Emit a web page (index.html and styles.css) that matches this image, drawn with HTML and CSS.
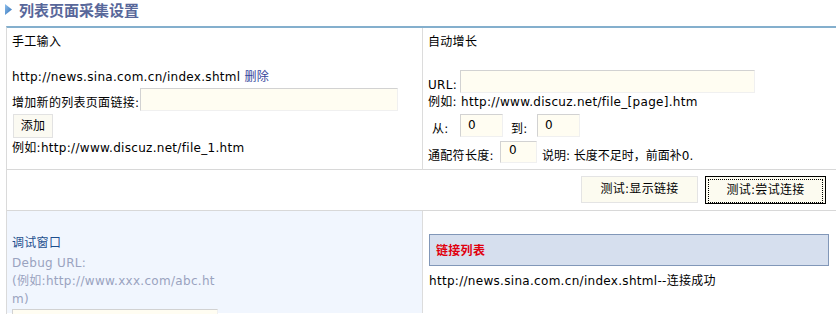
FILE: index.html
```html
<!DOCTYPE html>
<html>
<head>
<meta charset="utf-8">
<link rel="stylesheet" href="styles.css">
</head>
<body>
<div class="title">
  <svg class="tri" width="9" height="13" viewBox="0 0 9 13"><defs><linearGradient id="g" x1="0" y1="0" x2="1" y2="1"><stop offset="0" stop-color="#8fc0ec"/><stop offset="1" stop-color="#2f6fb8"/></linearGradient></defs><path d="M1 1 L8 6.5 L1 12 Z" fill="url(#g)"/></svg>
  <span>列表页面采集设置</span>
</div>
<div class="panel">
  <div class="cell c-left r1">
    <div class="line l-first">手工输入</div>
    <div class="line l-url">http://news.sina.com.cn/index.shtml <a class="del">删除</a></div>
    <div class="row r-add"><span>增加新的列表页面链接:</span><span class="inp w-add"></span></div>
    <div class="btn-add">添加</div>
    <div class="line l-ex">例如:http://www.discuz.net/file_1.htm</div>
  </div>
  <div class="cell c-right r1">
    <div class="line l-first">自动增长</div>
    <div class="row r-url"><span class="lab-url">URL:</span><span class="inp w-url"></span></div>
    <div class="line l-ex2">例如: http://www.discuz.net/file_[page].htm</div>
    <div class="row r-from"><span class="lab-from">从:</span><span class="inp w-num">0</span><span class="lab-to">到:</span><span class="inp w-num">0</span></div>
    <div class="row r-len"><span class="lab-len">通配符长度:</span><span class="inp w-len">0</span><span class="note">说明: 长度不足时，前面补0.</span></div>
  </div>
  <div class="cell c-full r2">
    <div class="btn b1">测试:显示链接</div>
    <div class="btn b2"><span>测试:尝试连接</span></div>
  </div>
  <div class="cell c-left r3">
    <div class="dbg-title">调试窗口</div>
    <div class="dbg-text">Debug URL:<br>(例如:http://www.xxx.com/abc.htm)</div>
    <div class="inp dbg-inp"></div>
  </div>
  <div class="cell c-right r3 r3r">
    <div class="listhead">链接列表</div>
    <div class="line l-res">http://news.sina.com.cn/index.shtml--连接成功</div>
  </div>
</div>
</body>
</html>
```
FILE: styles.css
```css
html, body {
  margin: 0;
  padding: 0;
  background: #fff;
  overflow: hidden;
}
body {
  font-family: "DejaVu Sans", "Noto Sans CJK SC", sans-serif;
  font-size: 12px;
  letter-spacing: 0.3px;
  color: #000;
  width: 836px;
  height: 314px;
}
.title {
  height: 20px;
  display: flex;
  align-items: center;
  padding-left: 4px;
  gap: 6px;
}
.title .tri { display: block; margin-top: -2px; }
.title span {
  font-family: "Noto Sans CJK SC", sans-serif;
  font-weight: bold;
  font-size: 15px;
  letter-spacing: 0;
  color: #58679a;
  line-height: 18px;
  margin-top: -1px;
}
.panel {
  margin-top: 6px;
  margin-left: 6px;
  border-top: 2px solid #84afcd;
  border-left: 1px solid #dadada;
  display: grid;
  grid-template-columns: 415px 414px;
  height: 286px;
  overflow: hidden;
}
.cell { box-sizing: border-box; }
.r1 {
  height: 142px;
  border-bottom: 1px solid #d8d8d8;
  padding-left: 5px;
}
.c-right.r1, .c-right.r3 { border-left: 1px solid #dcdcdc; }
.line { line-height: 16px; height: 16px; white-space: nowrap; }
.l-first { margin-top: 6px; }
.l-url { margin-top: 19px; }
.del { color: #34449a; text-decoration: none; }
.row { display: flex; white-space: nowrap; }
.r-add { margin-top: 3px; align-items: center; }
.r-add span:first-child { margin-top: 3px; }
.inp {
  box-sizing: border-box;
  display: block;
  background: #fffdf2;
  border-top: 1px solid #d2d2d2;
  border-left: 1px solid #d2d2d2;
  border-right: 1px solid #f0f0f0;
  border-bottom: 1px solid #f0f0f0;
  height: 23px;
  padding: 3px 0 0 7px;
  line-height: 14px;
}
.w-add { width: 258px; margin-left: 1px; }
.btn-add {
  margin-top: 3px;
  margin-left: 1px;
  width: 40px;
  height: 24px;
  box-sizing: border-box;
  background: #fbfaf2;
  border: 1px solid #e2e2e2;
  text-align: center;
  line-height: 22px;
}
.l-ex { margin-top: 2px; }
.r-url { margin-top: 20px; align-items: flex-end; }
.lab-url { width: 32px; line-height: 16px; }
.w-url { width: 295px; }
.l-ex2 { margin-top: 1px; }
.r-from { margin-top: 4px; align-items: center; }
.lab-from { width: 32px; padding-left: 4px; box-sizing: border-box; margin-top: 4px; }
.lab-to { width: 34px; padding-left: 8px; box-sizing: border-box; margin-top: 4px; }
.w-num { width: 43px; }
.r-len { margin-top: 4px; align-items: center; }
.lab-len { width: 72px; margin-top: 4px; }
.w-len { width: 37px; height: 22px; padding-left: 8px; padding-top: 1px; }
.note { margin-left: 5px; margin-top: 4px; letter-spacing: 0; }
.r2 {
  grid-column: 1 / 3;
  height: 40px;
  border-bottom: 1px solid #d8d8d8;
  display: flex;
  justify-content: flex-end;
  align-items: flex-start;
  padding-top: 5px;
  padding-right: 10px;
  gap: 7px;
}
.btn {
  box-sizing: border-box;
  height: 27px;
  text-align: center;
  line-height: 25px;
}
.b1 {
  width: 117px;
  background: #fcfbf0;
  border: 1px solid #e4e4e4;
}
.b2 {
  width: 121px;
  height: 28px;
  background: #fcfbf0;
  border: 1px solid #000;
  padding: 2px;
}
.b2 span {
  display: block;
  height: 22px;
  line-height: 20px;
  border: 1px dotted #000;
}
.r3 { height: 102px; }
.c-left.r3 {
  background: #f1f6fe;
  padding-left: 5px;
  padding-top: 24px;
}
.dbg-title { color: #1d4f8e; line-height: 16px; }
.dbg-text {
  color: #9aa3c0;
  width: 210px;
  word-break: break-all;
  line-height: 18px;
  margin-top: 3px;
}
.dbg-inp { width: 206px; margin-top: 1px; }
.r3r { padding: 23px 7px 0 6px; }
.listhead {
  height: 32px;
  box-sizing: border-box;
  background: #d6dfee;
  border: 1px solid #8197b8;
  color: #e0000e;
  font-weight: bold;
  font-family: "Noto Sans CJK SC", sans-serif;
  padding-left: 6px;
  line-height: 30px;
}
.l-res { margin-top: 7px; }
```
